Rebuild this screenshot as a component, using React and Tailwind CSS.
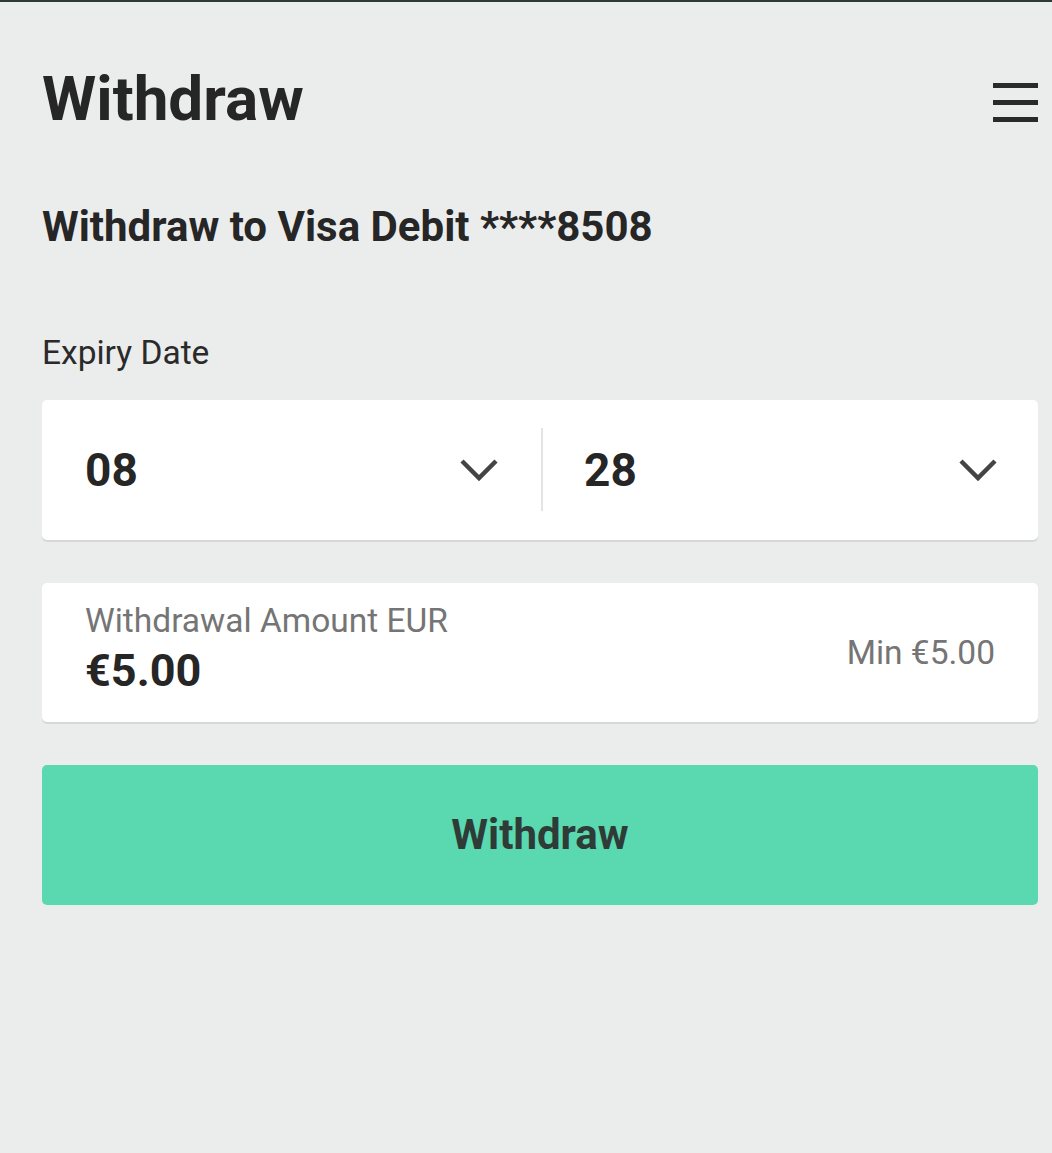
import React from "react";

function Chevron() {
  return (
    <svg width="38" height="24" viewBox="0 0 38 24" fill="none">
      <polyline points="2,3 19,20 36,3" stroke="#444444" strokeWidth="4.5" fill="none" />
    </svg>
  );
}

export default function App() {
  return (
    <div className="min-h-[1153px] w-full bg-[#ebedec] font-['Roboto',sans-serif] text-[#262626]">
      <div className="h-[2px] bg-[#2d3b36]" />
      <div className="pl-[42px] pr-[14px]">
        <div className="mt-[66px] flex items-start justify-between">
          <h1 className="text-[62px] font-bold leading-none">Withdraw</h1>
          <div className="mt-[15px] flex w-[45px] flex-col gap-[12px]">
            <div className="h-[5px] bg-[#2a2a2a]" />
            <div className="h-[5px] bg-[#2a2a2a]" />
            <div className="h-[5px] bg-[#2a2a2a]" />
          </div>
        </div>
        <h2 className="mt-[76px] text-[42px] font-bold leading-none">
          Withdraw to Visa Debit ****8508
        </h2>
        <div className="mt-[88px] text-[33.5px] leading-none text-[#2a2a2a]">Expiry Date</div>

        <div className="mt-[30px] flex h-[140px] items-center rounded-[5px] bg-white shadow-[0_2px_0_#d6d8d7]">
          <div className="flex flex-1 items-center justify-between px-[43px]">
            <span className="text-[46px] font-bold leading-none">08</span>
            <Chevron />
          </div>
          <div className="h-[83px] w-[2px] bg-[#e4e4e4]" />
          <div className="flex flex-1 items-center justify-between pl-[41px] pr-[41px]">
            <span className="text-[46px] font-bold leading-none">28</span>
            <Chevron />
          </div>
        </div>

        <div className="mt-[43px] flex h-[139px] items-start justify-between rounded-[5px] bg-white pl-[43px] pr-[43px] pt-[21px] shadow-[0_2px_0_#d6d8d7]">
          <div className="flex flex-col">
            <span className="text-[33.5px] leading-none text-[#757575]">Withdrawal Amount EUR</span>
            <span className="mt-[11px] text-[45px] font-bold leading-none">€5.00</span>
          </div>
          <span className="mt-[32px] text-[33.5px] leading-none text-[#757575]">Min €5.00</span>
        </div>

        <button className="mt-[43px] flex h-[140px] w-full items-center justify-center rounded-[5px] bg-[#5ad8b0] text-[42px] font-bold leading-none text-[#2f3b37]">
          Withdraw
        </button>
      </div>
    </div>
  );
}
